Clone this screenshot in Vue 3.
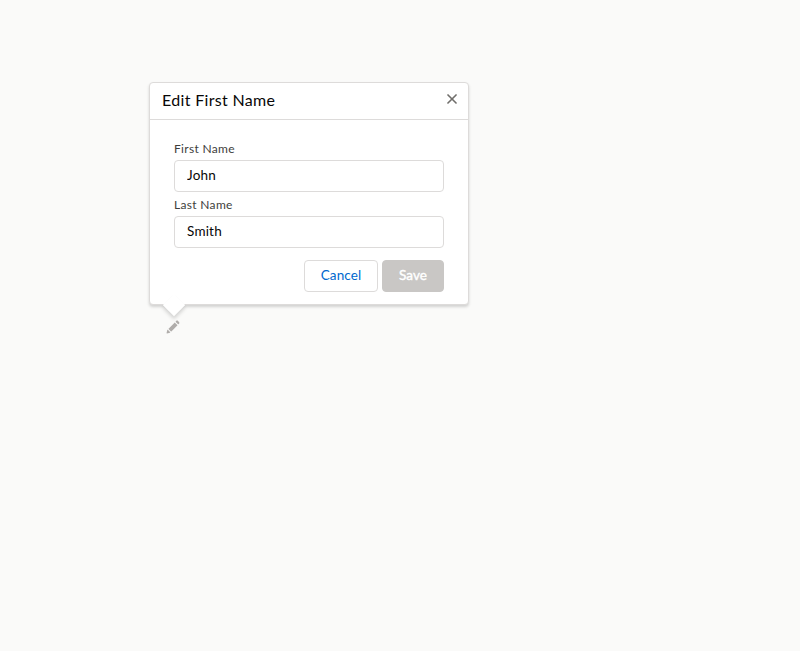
<script setup>
import { ref } from 'vue'
const firstName = ref('John')
const lastName = ref('Smith')
</script>

<template>
  <main class="page">
    <section class="popover">
      <header class="head">
        <h2 class="title">Edit First Name</h2>
        <button class="close" type="button">
          <svg viewBox="0 0 52 52" width="14" height="14"><path d="M31 25.4L44 12.3c.6-.6.6-1.5 0-2.1L42 8.1c-.6-.6-1.5-.6-2.1 0L26.8 21.2c-.4.4-1 .4-1.4 0L12.3 8c-.6-.6-1.5-.6-2.1 0l-2.1 2.1c-.6.6-.6 1.5 0 2.1l13.1 13.1c.4.4.4 1 0 1.4L8 39.9c-.6.6-.6 1.5 0 2.1l2.1 2.1c.6.6 1.5.6 2.1 0L25.3 31c.4-.4 1-.4 1.4 0l13.1 13.1c.6.6 1.5.6 2.1 0L44 42c.6-.6.6-1.5 0-2.1L31 26.8c-.4-.4-.4-1 0-1.4z" /></svg>
        </button>
      </header>
      <form class="body" @submit.prevent>
        <label class="label" for="first">First Name</label>
        <input id="first" v-model="firstName" class="input" type="text" />
        <label class="label second" for="last">Last Name</label>
        <input id="last" v-model="lastName" class="input" type="text" />
        <div class="actions">
          <button class="btn cancel" type="button">Cancel</button>
          <button class="btn save" type="submit" disabled>Save</button>
        </div>
      </form>
      <span class="nubbin"></span>
    </section>
    <button class="edit" type="button">
      <svg viewBox="0 0 52 52" width="14" height="14"><path d="M9.5 33.4l8.9 8.9c.4.4 1 .4 1.4 0L42 20c.4-.4.4-1 0-1.4l-8.8-8.8c-.4-.4-1-.4-1.4 0L9.5 32.1c-.4.4-.4 1 0 1.3zM36.1 5.7c-.4.4-.4 1 0 1.4l8.8 8.8c.4.4 1 .4 1.4 0l2.5-2.5c1.6-1.5 1.6-3.9 0-5.5l-4.7-4.7c-1.6-1.6-4.1-1.6-5.7 0l-2.3 2.5zM2.1 48.2c-.2 1 .7 1.9 1.7 1.7l10.9-2.6c.4-.1.7-.3.9-.5l.2-.2c.2-.2.3-.9-.1-1.3l-9-9c-.4-.4-1.1-.3-1.3-.1l-.2.2c-.3.3-.4.6-.5.9L2.1 48.2z" /></svg>
    </button>
  </main>
</template>

<style>
body { background: #fafaf9; }
</style>

<style scoped>
* { box-sizing: border-box; }
.page {
  min-height: 651px;
  padding: 82px 0 0 149px;
  font-family: Lato, "Open Sans", sans-serif;
  color: #080707;
}
.popover {
  position: relative;
  width: 320px;
  height: 223px;
  background: #fff;
  border: 1px solid #dddbda;
  border-radius: 4px;
  box-shadow: 0 2px 3px rgba(0, 0, 0, 0.16);
}
.head {
  display: flex;
  justify-content: space-between;
  height: 37px;
  padding: 7px 9px 0 12px;
  border-bottom: 1px solid #dddbda;
}
.title { margin: 0; font-size: 16px; line-height: 20px; font-weight: 400; letter-spacing: 0.32px; }
button { font-family: inherit; }
.close, .edit { display: block; padding: 0; border: 0; background: none; width: 14px; height: 14px; }
.close { margin-top: 2px; fill: #706e6b; }
.edit { margin: 15px 0 0 17px; fill: #b0adab; }
svg { display: block; }
.body { display: flex; flex-direction: column; padding: 20px 24px 0; }
.label { height: 20px; font-size: 12px; line-height: 18px; color: #3e3e3c; letter-spacing: 0.32px; }
.second { margin-top: 4px; }
.input {
  width: 100%;
  height: 32px;
  padding: 0 12px 2px;
  border: 1px solid #dddbda;
  border-radius: 4px;
  background: #fff;
  color: #080707;
  font: 400 13.5px Lato, "Open Sans", sans-serif;
  letter-spacing: 0.2px;
  outline: 0;
}
.actions { display: flex; justify-content: flex-end; gap: 4px; margin-top: 12px; }
.btn { height: 32px; padding: 0 0 2px; border: 1px solid #dddbda; border-radius: 4px; font-size: 13.5px; letter-spacing: 0.1px; }
.cancel { width: 74px; background: #fff; color: #0068ce; }
.save { width: 62px; background: #c9c7c5; border-color: #c9c7c5; color: #fff; -webkit-text-stroke: 0.4px #fff; }
.nubbin {
  position: absolute;
  left: 16px;
  bottom: -9px;
  width: 16px;
  height: 16px;
  background: #fff;
  transform: rotate(45deg);
  box-shadow: 2px 2px 4px rgba(0, 0, 0, 0.16);
  clip-path: polygon(100% 0, 140% 0, 140% 140%, 0 140%, 0 100%, 0 0);
}
</style>
